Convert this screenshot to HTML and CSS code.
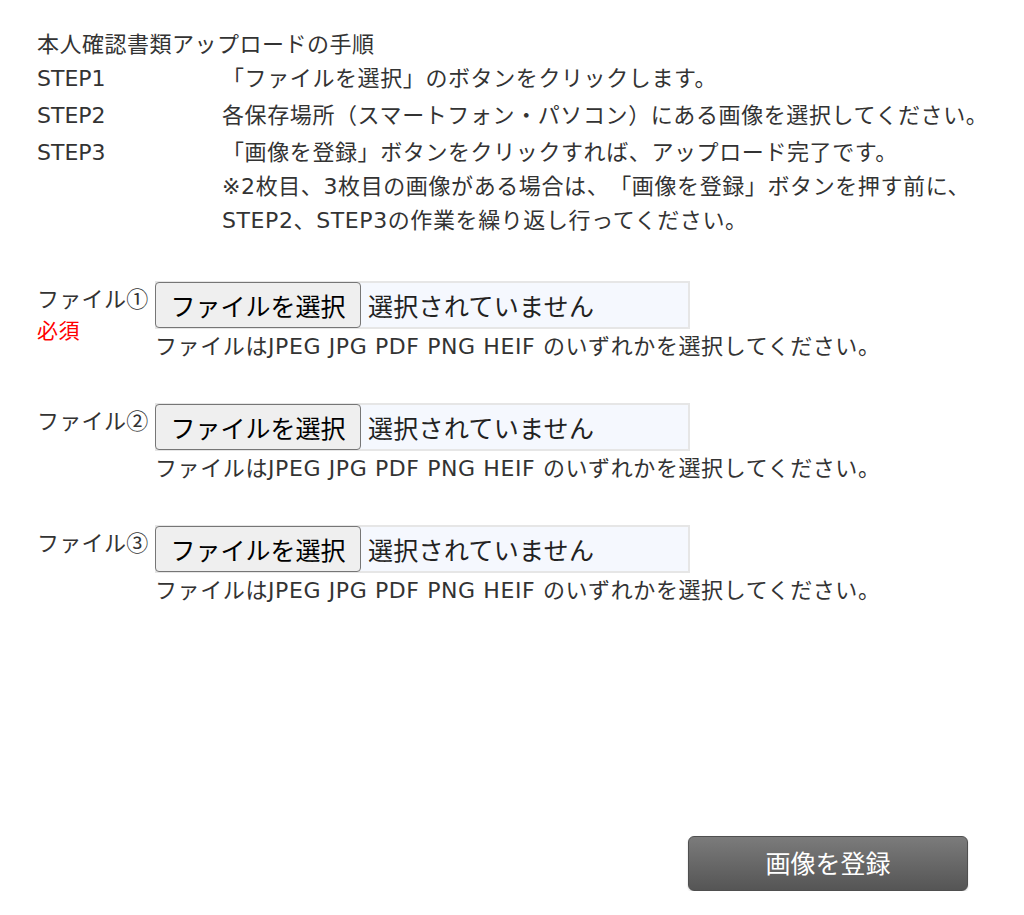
FILE: index.html
```html
<!DOCTYPE html>
<html lang="ja">
<head>
<meta charset="utf-8">
<title>本人確認書類アップロード</title>
<link rel="stylesheet" href="styles.css">
</head>
<body>
<main class="page">
  <section class="guide">
    <p class="guide-title">本人確認書類アップロードの手順</p>
    <div class="step">
      <div class="step-label">STEP1</div>
      <div class="step-text">「ファイルを選択」のボタンをクリックします。</div>
    </div>
    <div class="step">
      <div class="step-label">STEP2</div>
      <div class="step-text">各保存場所（スマートフォン・パソコン）にある画像を選択してください。</div>
    </div>
    <div class="step">
      <div class="step-label">STEP3</div>
      <div class="step-text">「画像を登録」ボタンをクリックすれば、アップロード完了です。<br>※2枚目、3枚目の画像がある場合は、「画像を登録」ボタンを押す前に、<br>STEP2、STEP3の作業を繰り返し行ってください。</div>
    </div>
  </section>

  <section class="files">
    <div class="file-row">
      <div class="file-label">ファイル①<span class="required">必須</span></div>
      <div class="file-body">
        <div class="file-input"><button class="file-btn" type="button">ファイルを選択</button><span class="file-status">選択されていません</span></div>
        <p class="file-hint">ファイルはJPEG JPG PDF PNG HEIF のいずれかを選択してください。</p>
      </div>
    </div>
    <div class="file-row">
      <div class="file-label">ファイル②</div>
      <div class="file-body">
        <div class="file-input"><button class="file-btn" type="button">ファイルを選択</button><span class="file-status">選択されていません</span></div>
        <p class="file-hint">ファイルはJPEG JPG PDF PNG HEIF のいずれかを選択してください。</p>
      </div>
    </div>
    <div class="file-row">
      <div class="file-label">ファイル③</div>
      <div class="file-body">
        <div class="file-input"><button class="file-btn" type="button">ファイルを選択</button><span class="file-status">選択されていません</span></div>
        <p class="file-hint">ファイルはJPEG JPG PDF PNG HEIF のいずれかを選択してください。</p>
      </div>
    </div>
  </section>

  <div class="actions">
    <button class="submit" type="button">画像を登録</button>
  </div>
</main>
</body>
</html>
```

FILE: styles.css
```css
* { box-sizing: border-box; }
html, body { margin: 0; padding: 0; background: #fff; }
body {
  font-family: "Noto Sans CJK JP", sans-serif;
  color: #333;
  font-size: 22px;
  text-spacing-trim: space-all;
}
.page {
  padding: 25px 0 0 37px;
  width: 1024px;
}
p { margin: 0; }
.guide { display: flex; flex-direction: column; gap: 3px; }
.guide-title {
  line-height: 34px;
  font-size: 22px;
  letter-spacing: 0.5px;
}
.step { display: flex; line-height: 34px; }
.step-label {
  width: 185px;
  flex: none;
  font-family: "DejaVu Sans", "Noto Sans CJK JP", sans-serif;
  font-size: 22px;
}
.step-text {
  font-family: "DejaVu Sans", "Noto Sans CJK JP", sans-serif;
  font-size: 22px;
  letter-spacing: 0.6px;
  white-space: nowrap;
}

.files {
  margin-top: 43px;
  display: flex;
  flex-direction: column;
  gap: 39px;
}
.file-row { display: flex; }
.file-label {
  width: 118px;
  flex: none;
  line-height: 30px;
  font-size: 22px;
  letter-spacing: 0.3px;
  display: flex;
  flex-direction: column;
  padding-top: 1px;
  white-space: nowrap;
}
.required { color: #f00; font-size: 21px; line-height: 34px; letter-spacing: 0.5px; }
.file-body { display: flex; flex-direction: column; }
.file-input {
  width: 535px;
  height: 48px;
  background: #f5f8fe;
  border: 2px solid #e6e6e6;
  display: flex;
  align-items: center;
}
.file-btn {
  margin: 0 0 0 -2px;
  height: 46px;
  width: 206px;
  font-family: "Noto Sans CJK JP", sans-serif;
  font-size: 25px;
  color: #000;
  background: #efefef;
  border: 1px solid #767676;
  border-radius: 4px;
  padding: 0;
  line-height: 1;
}
.file-status {
  margin-left: 7px;
  font-size: 25px;
  letter-spacing: 0.3px;
  color: #222;
}
.file-hint {
  line-height: 34px;
  margin-top: 1px;
  font-family: "DejaVu Sans", "Noto Sans CJK JP", sans-serif;
  font-size: 22px;
  letter-spacing: 0.6px;
  white-space: nowrap;
}

.actions {
  display: flex;
  justify-content: flex-end;
  padding-right: 56px;
  margin-top: 228px;
}
.submit {
  width: 280px;
  height: 55px;
  border: 1px solid #4f4f4f;
  border-radius: 6px;
  background: linear-gradient(#7b7b7b, #555);
  color: #fff;
  font-family: "Noto Sans CJK JP", sans-serif;
  font-size: 25px;
  line-height: 1;
  padding: 0 0 3px;
  box-shadow: 0 1px 2px rgba(0,0,0,0.2);
}
```
